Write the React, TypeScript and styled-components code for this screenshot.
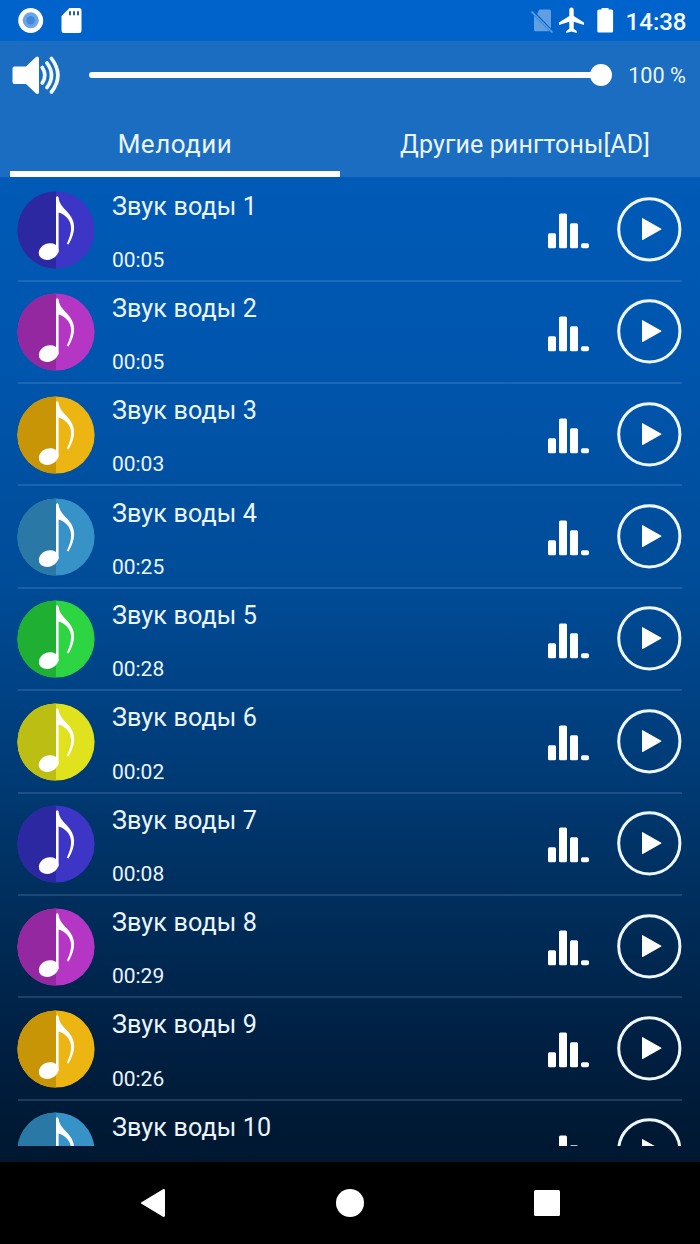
import React from 'react';
import styled, { createGlobalStyle } from 'styled-components';

const Global = createGlobalStyle`
  * { box-sizing: border-box; }
  body { margin: 0; background: #000; }
`;

const Screen = styled.div`
  width: 700px;
  height: 1244px;
  display: flex;
  flex-direction: column;
  overflow: hidden;
  color: #eaf5ff;
  font-family: Roboto, 'Liberation Sans', sans-serif;
  background: linear-gradient(180deg, #0062c8 0, #005ab6 180px, #0056ae 350px, #004c98 580px, #003c78 760px, #002e5c 900px, #001f41 1050px, #00172f 1162px);
`;

const StatusBar = styled.header`
  height: 41px;
  flex: none;
  display: flex;
  align-items: center;
  background: #0063cb;
`;

const Icon = styled.svg<{ $left?: number }>`
  display: block;
  flex: none;
  margin-left: ${p => p.$left ?? 0}px;
`;

const Clock = styled.span`
  margin-left: auto;
  margin-right: 13.5px;
  padding-top: 2px;
  font-size: 24px;
  font-weight: 500;
  line-height: 30px;
  color: #f6fbff;
`;

const Header = styled.section`
  height: 136px;
  flex: none;
  display: flex;
  flex-direction: column;
  background: #1b6dc1;
`;

const VolumeRow = styled.div`
  height: 68px;
  display: flex;
  align-items: center;
  padding: 0 14px 0 10px;
`;

const Track = styled.div`
  width: 512px;
  height: 6px;
  margin-left: 27px;
  border-radius: 3px;
  background: #fff;
  display: flex;
  align-items: center;
  justify-content: flex-end;
`;

const Thumb = styled.div`
  width: 22px;
  height: 22px;
  flex: none;
  margin-right: -11px;
  border-radius: 50%;
  background: #fff;
`;

const Percent = styled.span`
  margin-left: auto;
  font-size: 21.7px;
  white-space: nowrap;
`;

const Tabs = styled.nav`
  height: 68px;
  display: flex;
`;

const Tab = styled.div<{ $active?: boolean }>`
  width: 350px;
  display: flex;
  flex-direction: column;
  align-items: center;
  padding: ${p => (p.$active ? '20px 10px 0' : '21px 0 0')};
  font-size: ${p => (p.$active ? 26 : 25)}px;
  line-height: 30px;
  letter-spacing: ${p => (p.$active ? 0.5 : 0.1)}px;
`;

const Indicator = styled.div`
  align-self: stretch;
  height: 6px;
  margin-top: 12px;
  background: #fff;
`;

const List = styled.main`
  height: 969px;
  flex: none;
  overflow: hidden;
  padding: 2.4px 18px 0;
`;

const Row = styled.article`
  height: 102.37px;
  display: flex;
  align-items: flex-start;
  border-bottom: 2px solid rgba(130, 170, 220, 0.21);
`;

const Texts = styled.div`
  flex: 1;
  padding-left: 16.5px;
`;

const Title = styled.div`
  margin-top: 12.2px;
  font-size: 25.2px;
  line-height: 30px;
  letter-spacing: 0.1px;
`;

const Duration = styled.div`
  margin-top: 25.2px;
  font-size: 21px;
  line-height: 26px;
`;

const Art = styled.svg`
  display: block;
  flex: none;
  margin: 11.600px 0 0 -0.6px;
`;

const Bars = styled.svg`
  display: block;
  flex: none;
  margin-top: 33.9px;
`;

const Play = styled.svg`
  display: block;
  flex: none;
  margin: 17.6px 0 0 27px;
`;

const NavBar = styled.footer`
  height: 82px;
  flex: none;
  margin-top: auto;
  display: flex;
  align-items: center;
  justify-content: center;
  background: #000;
`;

const palette = [
  ['#2c28a2', '#3c35c5'],
  ['#9428a1', '#b536c5'],
  ['#c79505', '#edb512'],
  ['#2a78a6', '#3792c8'],
  ['#1faf32', '#2cd541'],
  ['#bdbe13', '#e0e21d'],
];

const sounds: { title: string; duration?: string }[] = [
  { title: 'Звук воды 1', duration: '00:05' },
  { title: 'Звук воды 2', duration: '00:05' },
  { title: 'Звук воды 3', duration: '00:03' },
  { title: 'Звук воды 4', duration: '00:25' },
  { title: 'Звук воды 5', duration: '00:28' },
  { title: 'Звук воды 6', duration: '00:02' },
  { title: 'Звук воды 7', duration: '00:08' },
  { title: 'Звук воды 8', duration: '00:29' },
  { title: 'Звук воды 9', duration: '00:26' },
  { title: 'Звук воды 10' },
];

const NoteArt = ({ dark, light }: { dark: string; light: string }) => (
  <Art width="78" height="78" viewBox="0 0 78 78">
    <circle cx="39" cy="39" r="38.6" fill={light} />
    <path d="M39 .4a38.600 38.600 0 0 0 0 77.200z" fill={dark} />
    <path d="M39 6q1.400-1.600 2.500.2C42.200 12.500 45.500 15.800 50 20.500c8.700 9 9.800 19 1.500 33l-1.700-.8c5.700-11.500 5.700-20.500 0-26.200-2.600-2.700-5.200-4.300-8.200-5V61.500H39z" fill="#fff" />
    <ellipse cx="31.600" cy="60.600" rx="10.100" ry="8.100" transform="rotate(-22 31.600 60.600)" fill="#fff" />
  </Art>
);

const SoundRow = ({ index }: { index: number }) => {
  const [dark, light] = palette[index % palette.length];
  const { title, duration } = sounds[index];
  return (
    <Row>
      <NoteArt dark={dark} light={light} />
      <Texts>
        <Title>{title}</Title>
        {duration && <Duration>{duration}</Duration>}
      </Texts>
      <Bars width="42" height="36" viewBox="0 0 42 36" fill="#fff">
        <rect x="0" y="20.300" width="8" height="15" rx="1.500" />
        <rect x="11" y="0.600" width="8" height="34.700" rx="1.500" />
        <rect x="22" y="10.300" width="8" height="25" rx="1.500" />
        <rect x="33" y="30.300" width="8" height="5" rx="1.800" />
      </Bars>
      <Play width="65" height="65" viewBox="0 0 65 65">
        <circle cx="32.300" cy="32.300" r="30.600" fill="none" stroke="#eef7ff" strokeWidth="3" />
        <path d="M25 21.600v21a.5.500 0 0 0 .8.400l18.500-10.500a.5.500 0 0 0 0-.8L25.800 21.200a.5.500 0 0 0-.8.400z" fill="#fff" />
      </Play>
    </Row>
  );
};

export default function App() {
  return (
    <Screen>
      <Global />
      <StatusBar>
        <Icon width="100" height="41" viewBox="0 0 100 41">
          <circle cx="30.700" cy="20.500" r="12.500" fill="#fff" />
          <circle cx="30.700" cy="20.300" r="8" fill="#6ba5e6" />
          <circle cx="30.700" cy="20.300" r="4.200" fill="#4188dc" />
          <path d="M69.500 8H79a2.500 2.500 0 0 1 2.500 2.500v20A2.500 2.500 0 0 1 79 33H64a2.500 2.500 0 0 1-2.500-2.500V16z" fill="#fff" />
          <path d="M70 11.300v4M74 11.300v4M78 11.300v4" stroke="#2a5da5" strokeWidth="2" />
        </Icon>
        <Icon $left={430} width="90" height="41" viewBox="530 0 90 41">
          <path d="M539.500 9.500h10a1.500 1.500 0 0 1 1.500 1.500v17.500L537 14z" fill="#609fe1" />
          <path d="M534 15.500 549.500 31.300h-14a1.500 1.500 0 0 1-1.500-1.500z" fill="#609fe1" />
          <path d="M531.500 11.500 552.500 32.500" stroke="#609fe1" strokeWidth="1.700" />
          <path d="M584 25v-2.600l-10.300-6.500V9.700a2 2 0 0 0-4.400 0v6.200L559 22.400V25l10.300-3.200v7l-3 2.100V33l5.200-1.500 5.200 1.500v-2.100l-3-2.100v-7z" fill="#fff" />
          <path d="M598.800 9.500h2.800V8h7v1.500h3A1.500 1.500 0 0 1 613.100 11v20a1.500 1.500 0 0 1-1.500 1.500h-12.800a1.500 1.500 0 0 1-1.500-1.500V11a1.500 1.500 0 0 1 1.500-1.500z" fill="#fff" />
        </Icon>
        <Clock>14:38</Clock>
      </StatusBar>
      <Header>
        <VolumeRow>
          <Icon width="52" height="42" viewBox="0 0 52 42">
            <path d="M4.500 12.500H16L26 3a1.800 1.800 0 0 1 3 1.300v34a1.800 1.800 0 0 1-3 1.300L16 30H4.500a2 2 0 0 1-2-2V14.500a2 2 0 0 1 2-2z" fill="#fff" />
            <path d="M32.300 13.500q5 7.800 0 15.500M37 9q9 12.300 0 24.500M41.500 4.500q12.800 16.800 0 33.500" fill="none" stroke="#f0f9ff" strokeWidth="3.700" strokeLinecap="round" />
          </Icon>
          <Track><Thumb /></Track>
          <Percent>100 %</Percent>
        </VolumeRow>
        <Tabs>
          <Tab $active>Мелодии<Indicator /></Tab>
          <Tab>Другие рингтоны[AD]</Tab>
        </Tabs>
      </Header>
      <List>
        {sounds.map((s, i) => <SoundRow key={s.title} index={i} />)}
      </List>
      <NavBar>
        <Icon width="700" height="82" viewBox="0 0 700 82" fill="#fff">
          <path d="M141.500 40.200 163 27.300c1-.6 2 0 2 1.200v25c0 1.200-1 1.800-2 1.200l-21.500-12.900c-.8-.5-.8-1.100 0-1.600z" />
          <circle cx="350" cy="41" r="14" />
          <rect x="534" y="28" width="26" height="26" rx="1.500" />
        </Icon>
      </NavBar>
    </Screen>
  );
}
